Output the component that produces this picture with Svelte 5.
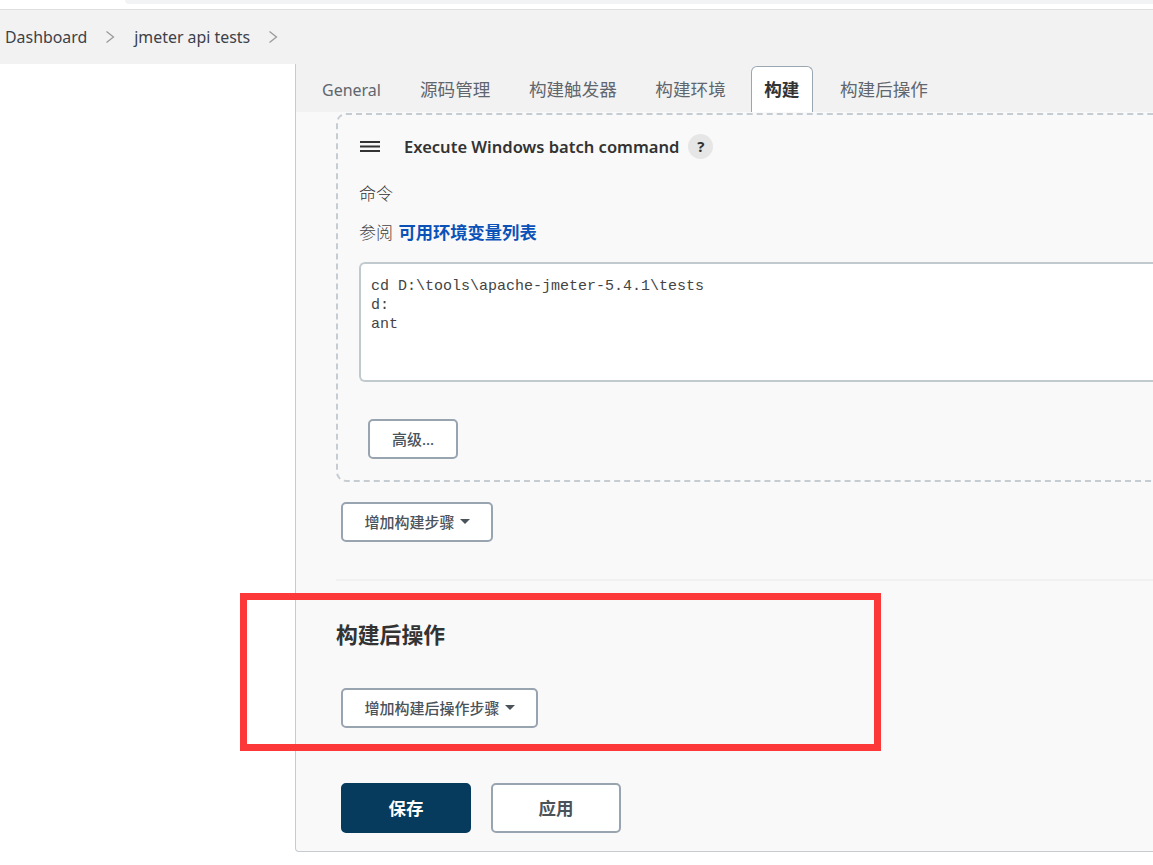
<script>
  const tabs = ['General', '源码管理', '构建触发器', '构建环境', '构建', '构建后操作'];
  const active = '构建';
  const command = 'cd D:\\tools\\apache-jmeter-5.4.1\\tests\nd:\nant';
</script>

<div class="page">
  <div class="topstrip"><div class="addr"></div></div>
  <nav class="crumbs">
    <span class="crumb">Dashboard</span>
    <svg class="chev" viewBox="0 0 10 14" width="10" height="14"><path d="M1.5 1.5 8.5 7l-7 5.5" /></svg>
    <span class="crumb second">jmeter api tests</span>
    <svg class="chev" viewBox="0 0 10 14" width="10" height="14"><path d="M1.5 1.5 8.5 7l-7 5.5" /></svg>
  </nav>
  <div class="main">
    <aside class="side"></aside>
    <section class="panel">
      <div class="tabs">
        {#each tabs as t}
          <div class="tab" class:on={t === active} class:latin={t === 'General'}>{t}</div>
        {/each}
      </div>
      <div class="body">
        <div class="step">
          <div class="step-head">
            <svg class="grip" viewBox="0 0 20 11" width="20" height="11"><path d="M0 1h20M0 5.5h20M0 10h20" /></svg>
            <span class="step-title">Execute Windows batch command</span>
            <span class="help">?</span>
          </div>
          <div class="label">命令</div>
          <div class="hint">参阅 <span class="link">可用环境变量列表</span></div>
          <pre class="code">{command}</pre>
          <button class="btn adv">高级...</button>
        </div>
        <button class="btn add">增加构建步骤<i class="caret"></i></button>
        <div class="rule"></div>
        <h2>构建后操作</h2>
        <button class="btn add post">增加构建后操作步骤<i class="caret"></i></button>
        <div class="actions">
          <button class="btn big primary">保存</button>
          <button class="btn big">应用</button>
        </div>
      </div>
    </section>
  </div>
  <div class="mark"></div>
</div>

<style>
  :global(body) { margin: 0; background: #fff; }
  .page {
    position: relative;
    width: 1153px;
    height: 865px;
    overflow: hidden;
    font-family: "Noto Sans", "Noto Sans CJK SC", sans-serif;
    color: #333;
  }
  .topstrip { height: 9px; background: #fff; overflow: hidden; }
  .addr {
    height: 4px;
    margin-left: 125px;
    background: #f1f3f4;
    border-bottom-left-radius: 8px;
  }
  .crumbs {
    height: 54px;
    box-sizing: content-box;
    border-top: 1px solid #dedede;
    background: #f2f2f3;
    display: flex;
    align-items: center;
    padding: 0 0 2px 5px;
    margin-bottom: -2px;
    font-size: 15.9px;
    color: #3c4148;
  }
  .second { margin-left: 19px; }
  .chev { margin-left: 18px; fill: none; stroke: #9a9a9a; stroke-width: 1.3; }
  .main { display: flex; height: 788px; position: relative; }
  .side { width: 295px; flex: none; background: #fff; }
  .panel {
    flex: 1;
    border-left: 1px solid #c5cbd0;
    border-bottom: 1px solid #c5cbd0;
    border-bottom-left-radius: 4px;
    background: #f9f9f9;
    display: flex;
    flex-direction: column;
  }
  .tabs {
    height: 48px;
    flex: none;
    background: #f2f2f3;
    display: flex;
    align-items: flex-end;
    padding-left: 26px;
    font-size: 17.6px;
    color: #5f666d;
  }
  .tab {
    height: 46px;
    box-sizing: border-box;
    display: flex;
    align-items: center;
    margin-right: 38.5px;
    padding-top: 1px;
    line-height: 1;
  }
  .tab.latin { font-size: 16px; margin-right: 39px; }
  .tab.on {
    background: #fff;
    color: #333;
    font-weight: 700;
    border: 1px solid #9aa7b3;
    border-bottom: 0;
    border-radius: 6px 6px 0 0;
    padding: 1px 12.5px 0;
    margin: 0 27px 0 -13.5px;
  }
  .body { padding: 1px 0 0 40px; flex: 1; }
  .step {
    box-sizing: border-box;
    height: 369px;
    width: 840px;
    border: 2px dashed #c5cdd3;
    border-radius: 10px;
    padding: 0 0 0 21px;
  }
  .step-head {
    display: flex;
    align-items: center;
    height: 38px;
    margin-top: 12px;
  }
  .grip { fill: none; stroke: #333; stroke-width: 1.9; flex: none; margin-left: 1px; }
  .step-title { margin-left: 24px; font-size: 16.55px; font-weight: 600; color: #333; }
  .help {
    margin-left: 9px;
    width: 25px;
    height: 25px;
    border-radius: 50%;
    background: #e6e6e6;
    font-size: 15px;
    font-weight: 700;
    display: flex;
    align-items: center;
    justify-content: center;
  }
  .label { margin-top: 17px; font-size: 17px; line-height: 24px; font-weight: 300; }
  .hint { margin-top: 15px; font-size: 17px; line-height: 24px; color: #444; font-weight: 300; }
  .link { color: #0b52b8; font-weight: 700; font-size: 17.3px; margin-left: 1px; }
  .code {
    box-sizing: border-box;
    height: 120px;
    margin: 17px 0 0 0;
    padding: 13px 10px;
    background: #fff;
    border: 2px solid #c0cace;
    border-right: 0;
    border-radius: 6px 0 0 6px;
    font-family: "Liberation Mono", "DejaVu Sans Mono", monospace;
    font-size: 15px;
    line-height: 19px;
    color: #444;
  }
  .btn {
    display: flex;
    align-items: center;
    justify-content: center;
    box-sizing: border-box;
    background: #fff;
    border: 2px solid #98a5b0;
    border-radius: 5px;
    font-family: inherit;
    font-size: 15px;
    font-weight: 500;
    color: #4a525a;
    padding: 0 0 2px;
  }
  .adv { margin: 37px 0 0 9px; width: 90px; height: 40px; }
  .add { margin: 20px 0 0 5px; width: 152px; height: 40px; }
  .post { margin-top: 38px; width: 197px; }
  .caret {
    display: inline-block;
    margin-left: 5px;
    border-left: 5px solid transparent;
    border-right: 5px solid transparent;
    border-top: 5px solid #4a525a;
  }
  .rule { height: 2px; width: 817px; background: #f1f1f1; margin-top: 37px; }
  h2 {
    margin: 39px 0 0 0;
    font-size: 21.8px;
    line-height: 30px;
    font-weight: 700;
    color: #333;
  }
  .actions { display: flex; gap: 20px; margin: 55px 0 0 5px; }
  .big { width: 130px; height: 50px; font-size: 17.5px; font-weight: 700; }
  .primary { background: #063b5e; border-color: #063b5e; color: #fff; }
  .mark {
    position: absolute;
    left: 240px;
    top: 593px;
    width: 641px;
    height: 158px;
    box-sizing: border-box;
    border: 7px solid #fc3838;
    pointer-events: none;
  }
</style>
